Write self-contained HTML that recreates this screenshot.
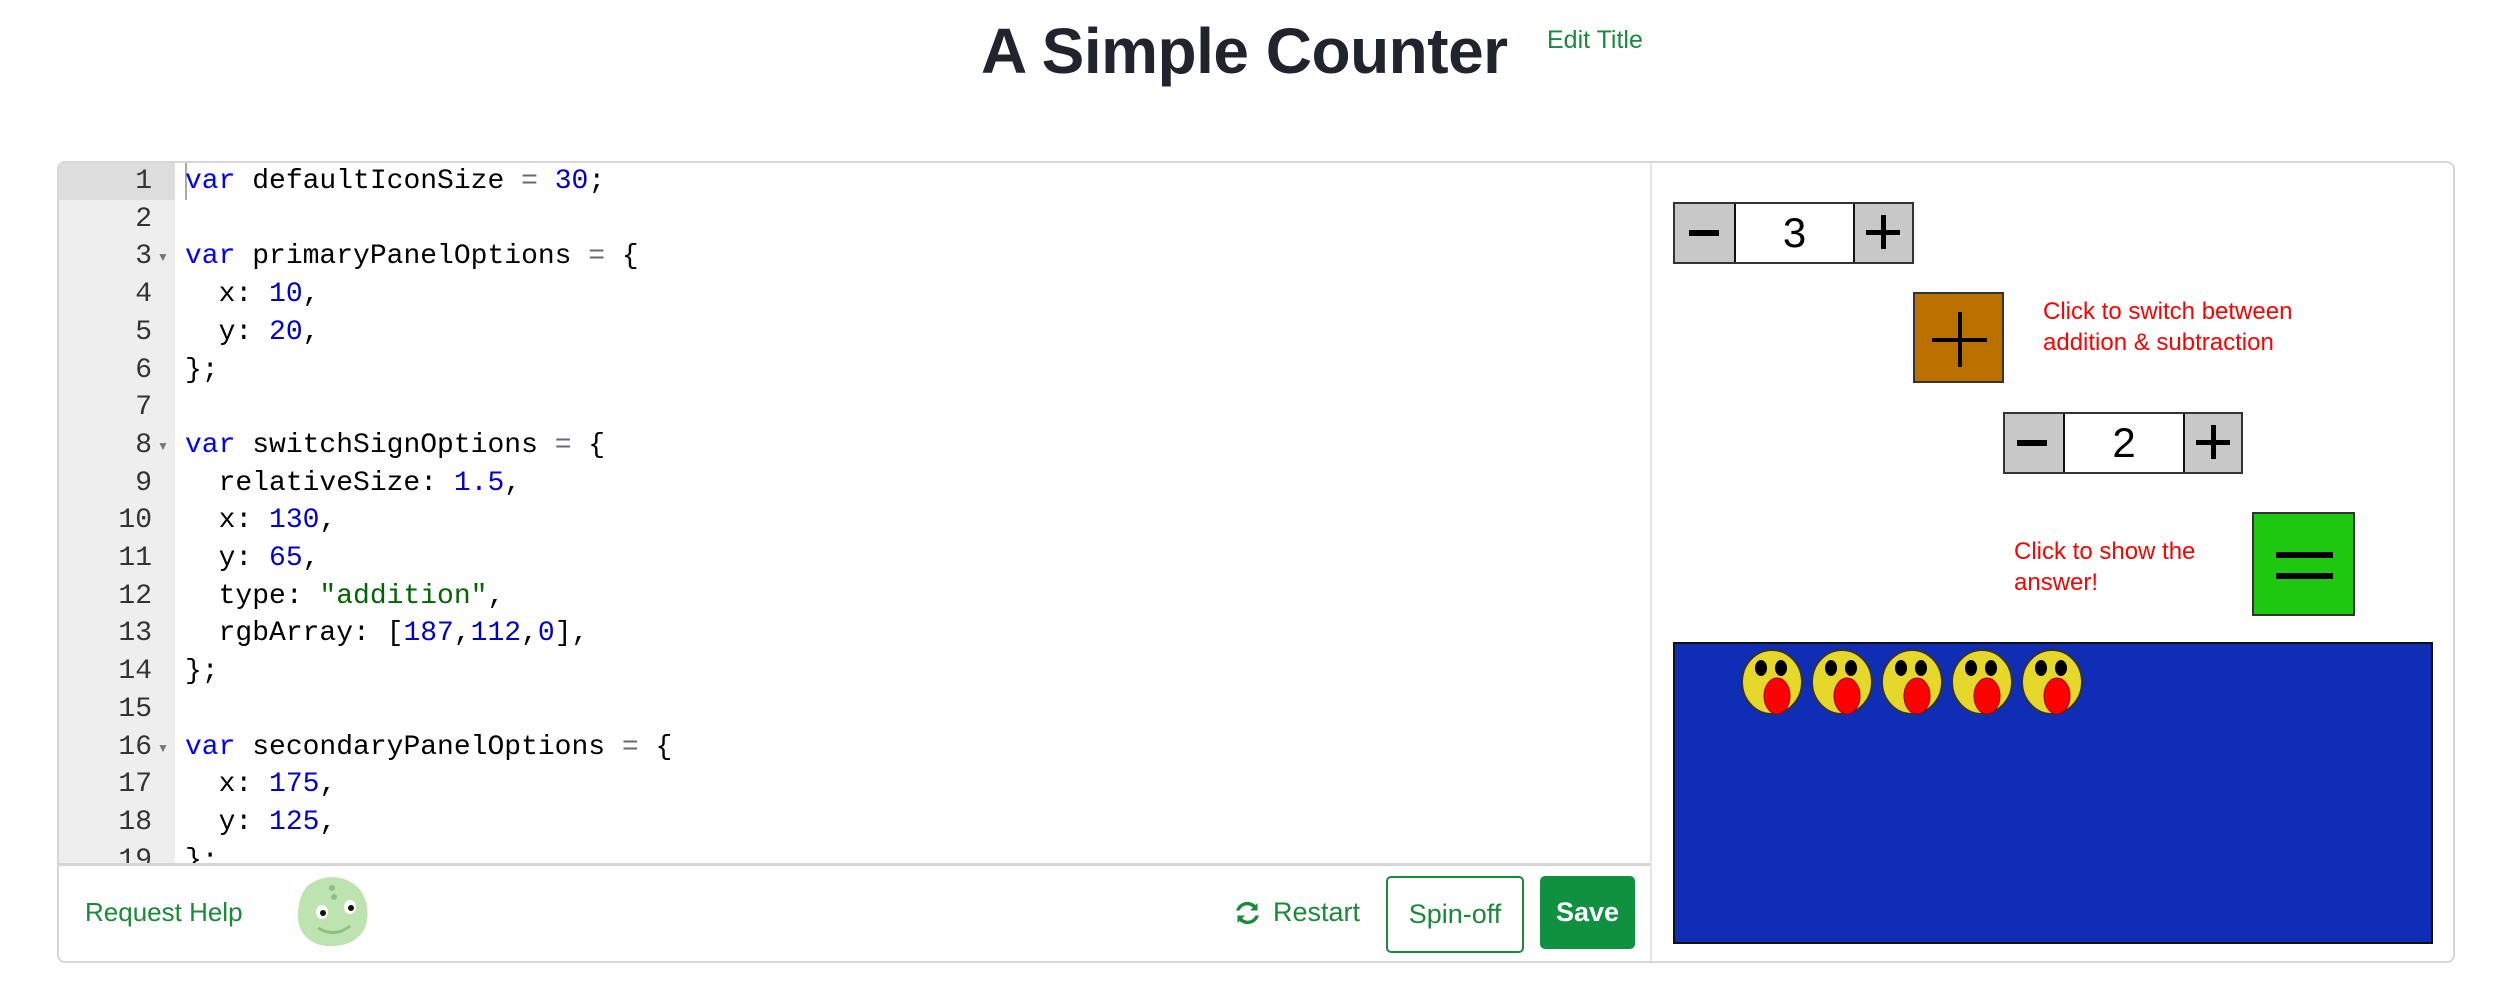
<!DOCTYPE html>
<html><head><meta charset="utf-8"><style>
*{margin:0;padding:0;box-sizing:border-box}
body{width:2504px;height:1008px;background:#fff;position:relative;overflow:hidden;font-family:"Liberation Sans",Arial,sans-serif}
.a{position:absolute}
h1{position:absolute;left:981px;top:14px;font-size:64px;font-weight:bold;color:#21242c;white-space:nowrap;letter-spacing:-0.5px}
.edit{left:1547px;top:26px;font-size:25px;color:#1a8a3a}
.box{left:57px;top:161px;width:2398px;height:802px;border:2px solid #d6d6d6;border-radius:8px}
.gut{left:59px;top:163px;width:116px;height:700px;background:#eee}
.gl1{left:59px;top:163px;width:116px;height:37px;background:#ddd}
.code{left:185px;top:163px;font-family:"Liberation Mono",monospace;font-size:28px;line-height:37.7px;white-space:pre;color:#000;height:700px;overflow:hidden}
.nums{left:59px;top:163px;width:93px;text-align:right;font-family:"Liberation Mono",monospace;font-size:28px;line-height:37.7px;color:#333;white-space:pre;height:700px;overflow:hidden}
.k{color:#00f}.n{color:#00c}.s{color:#060}.o{color:#667}
.fold{position:absolute;left:157px;font-size:12px;color:#777;line-height:12px}
.sep{left:1650px;top:163px;width:2px;height:798px;background:#e6e6e6}
.fline{left:59px;top:863px;width:1591px;height:3px;background:#d6d6d6}
.green{color:#1a8a3a}
.ctr{border:2px solid #333;background:#c8c8c8;display:flex}
.ctr div{height:100%}
.txt{color:#f00;font-size:24px;line-height:31px}
</style></head><body>
<h1>A Simple Counter</h1>
<div class="a edit">Edit Title</div>
<div class="a box"></div>
<div class="a gut"></div>
<div class="a gl1"></div>
<div class="a" style="left:185px;top:163px;width:2px;height:37px;background:#aaa"></div>
<div class="a nums">1
2
3
4
5
6
7
8
9
10
11
12
13
14
15
16
17
18
19</div>
<div class="a fold" style="top:251px">▼</div>
<div class="a fold" style="top:440px">▼</div>
<div class="a fold" style="top:742px">▼</div>
<div class="a code"><span class="k">var</span> defaultIconSize <span class="o">=</span> <span class="n">30</span>;

<span class="k">var</span> primaryPanelOptions <span class="o">=</span> {
  x: <span class="n">10</span>,
  y: <span class="n">20</span>,
};

<span class="k">var</span> switchSignOptions <span class="o">=</span> {
  relativeSize: <span class="n">1.5</span>,
  x: <span class="n">130</span>,
  y: <span class="n">65</span>,
  type: <span class="s">"addition"</span>,
  rgbArray: [<span class="n">187</span>,<span class="n">112</span>,<span class="n">0</span>],
};

<span class="k">var</span> secondaryPanelOptions <span class="o">=</span> {
  x: <span class="n">175</span>,
  y: <span class="n">125</span>,
};</div>
<div class="a sep"></div>
<div class="a fline"></div>
<div class="a green" style="left:85px;top:897px;font-size:26px">Request Help</div>
<svg class="a" style="left:290px;top:872px" width="85" height="80" viewBox="0 0 85 80">
<path d="M20 12 C40 -2 70 6 76 30 C82 55 70 72 45 74 C20 76 6 60 8 40 C9 28 12 18 20 12Z" fill="#bde3b0"/>
<circle cx="42" cy="16" r="3" fill="#8fbf84"/><circle cx="44" cy="25" r="3" fill="#8fbf84"/>
<ellipse cx="32" cy="40" rx="6" ry="7" fill="#fff"/><circle cx="33" cy="41" r="3" fill="#111"/>
<ellipse cx="60" cy="35" rx="6" ry="7" fill="#fff"/><circle cx="61" cy="36" r="3" fill="#111"/>
<path d="M28 56 Q45 66 60 54" stroke="#8fbf84" stroke-width="3" fill="none"/>
</svg>
<svg class="a" style="left:1232px;top:898px" width="31" height="30" viewBox="0 0 24 24"><path d="M20 4v6h-6l2.3-2.3A6.5 6.5 0 0 0 5.7 10H2.9A9.3 9.3 0 0 1 18.3 5.7L20 4zM4 20v-6h6l-2.3 2.3A6.5 6.5 0 0 0 18.3 14h2.8A9.3 9.3 0 0 1 5.7 18.3L4 20z" fill="#1a8a3a"/></svg>
<div class="a green" style="left:1273px;top:897px;font-size:27px">Restart</div>
<div class="a green" style="left:1386px;top:876px;width:138px;height:77px;border:2px solid #1a8a3a;border-radius:5px;font-size:27px;text-align:center;line-height:73px">Spin-off</div>
<div class="a" style="left:1540px;top:876px;width:95px;height:73px;background:#0f9140;border-radius:5px;color:#fff;font-size:27px;font-weight:bold;text-align:center;line-height:73px">Save</div>

<div class="a ctr" style="left:1673px;top:202px;width:241px;height:62px">
<div style="width:61px;border-right:2px solid #111;position:relative"><div class="a" style="left:14px;top:26px;width:30px;height:6px;background:#000"></div></div>
<div style="width:119px;background:#fff;border-right:2px solid #111;font-size:42px;text-align:center;line-height:58px">3</div>
<div style="flex:1;position:relative"><div class="a" style="left:11px;top:26px;width:34px;height:5px;background:#000"></div><div class="a" style="left:26px;top:11px;width:5px;height:34px;background:#000"></div></div>
</div>
<div class="a" style="left:1913px;top:292px;width:91px;height:91px;background:#bb7000;border:2px solid #333">
<div class="a" style="left:17px;top:44px;width:55px;height:4px;background:#000"></div><div class="a" style="left:43px;top:18px;width:4px;height:55px;background:#000"></div></div>
<div class="a txt" style="left:2043px;top:296px">Click to switch between<br>addition &amp; subtraction</div>
<div class="a ctr" style="left:2003px;top:412px;width:240px;height:62px">
<div style="width:60px;border-right:2px solid #111;position:relative"><div class="a" style="left:12px;top:26px;width:30px;height:6px;background:#000"></div></div>
<div style="width:120px;background:#fff;border-right:2px solid #111;font-size:42px;text-align:center;line-height:58px">2</div>
<div style="flex:1;position:relative"><div class="a" style="left:11px;top:26px;width:34px;height:5px;background:#000"></div><div class="a" style="left:26px;top:11px;width:5px;height:34px;background:#000"></div></div>
</div>
<div class="a txt" style="left:2014px;top:536px">Click to show the<br>answer!</div>
<div class="a" style="left:2252px;top:512px;width:103px;height:104px;background:#1ec810;border:2px solid #333">
<div class="a" style="left:22px;top:38px;width:57px;height:6px;background:#000"></div><div class="a" style="left:22px;top:59px;width:57px;height:6px;background:#000"></div></div>
<div class="a" style="left:1673px;top:642px;width:760px;height:302px;background:#102db5;border:2px solid #111"></div>
<svg class="a" style="left:1740px;top:648px" width="360" height="72">
<g id="f"><ellipse cx="32" cy="34" rx="30" ry="32" fill="#e6d82a" stroke="#333" stroke-width="2"/><ellipse cx="21" cy="20" rx="6" ry="8" fill="#000"/><ellipse cx="41" cy="20" rx="6" ry="8" fill="#000"/><ellipse cx="37" cy="48" rx="13" ry="18" fill="#f00" stroke="#a00" stroke-width="1"/></g>
<use href="#f" x="70"/><use href="#f" x="140"/><use href="#f" x="210"/><use href="#f" x="280"/>
</svg>
</body></html>
